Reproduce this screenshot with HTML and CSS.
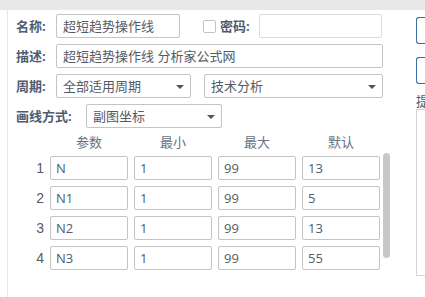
FILE: index.html
```html
<!DOCTYPE html>
<html lang="zh">
<head>
    <meta charset="UTF-8">
    <meta name="viewport" content="width=device-width, initial-scale=1.0">
    <title>指标编辑</title>
    <link rel="stylesheet" href="styles.css">
</head>
<body>

<div class="topbar"></div>

<div class="main">
    <div class="panel">
        <div class="row">
            <label class="lbl">名称:</label>
            <div class="input w-name">超短趋势操作线</div>
            <span class="check"></span>
            <label class="lbl lbl-pwd">密码:</label>
            <div class="input w-pwd"></div>
        </div>
        <div class="row">
            <label class="lbl">描述:</label>
            <div class="input w-desc">超短趋势操作线 分析家公式网</div>
        </div>
        <div class="row">
            <label class="lbl">周期:</label>
            <div class="select w-period">全部适用周期<i class="arrow"></i></div>
            <div class="select w-type">技术分析<i class="arrow"></i></div>
        </div>
        <div class="row">
            <label class="lbl">画线方式:</label>
            <div class="select w-draw">副图坐标<i class="arrow"></i></div>
        </div>

        <div class="params">
            <div class="grid">
                <span></span>
                <span class="head">参数</span>
                <span class="head">最小</span>
                <span class="head">最大</span>
                <span class="head">默认</span>

                <span class="num">1</span>
                <div class="input cell">N</div>
                <div class="input cell">1</div>
                <div class="input cell">99</div>
                <div class="input cell">13</div>

                <span class="num">2</span>
                <div class="input cell">N1</div>
                <div class="input cell">1</div>
                <div class="input cell">99</div>
                <div class="input cell">5</div>

                <span class="num">3</span>
                <div class="input cell">N2</div>
                <div class="input cell">1</div>
                <div class="input cell">99</div>
                <div class="input cell">13</div>

                <span class="num">4</span>
                <div class="input cell">N3</div>
                <div class="input cell">1</div>
                <div class="input cell">99</div>
                <div class="input cell">55</div>
            </div>
            <div class="thumb"></div>
        </div>
    </div>

    <div class="side">
        <div class="btn"></div>
        <div class="btn"></div>
        <div class="side-lbl">提</div>
        <div class="textarea"></div>
    </div>
</div>

</body>
</html>
```

FILE: styles.css
```css
body {
    margin: 0;
    padding: 0;
    background-color: #fff;
    font-family: "Open Sans", "Noto Sans CJK SC", sans-serif;
    font-size: 13px;
    color: #555b66;
    overflow: hidden;
}
.topbar {
    height: 10px;
    background-color: #e8e8e8;
}
.main {
    display: flex;
    height: 287px;
}
.panel {
    width: 392px;
    margin-left: 7px;
    border-left: 1px solid #e6e6e6;
    padding: 4px 0 0 8px;
    box-sizing: border-box;
    flex-shrink: 0;
}
.row {
    display: flex;
    align-items: center;
    height: 24px;
    margin-bottom: 6px;
}
.lbl {
    font-weight: bold;
    color: #4f5c70;
    line-height: 24px;
    white-space: nowrap;
    width: 40px;
}
.lbl-pwd {
    width: 39px;
}
.input, .select {
    height: 24px;
    box-sizing: border-box;
    border: 1px solid #c4c4c4;
    border-radius: 2px;
    padding: 0 6px;
    line-height: 22px;
    color: #555b66;
    white-space: nowrap;
    overflow: hidden;
    position: relative;
}
.w-name { width: 124px; }
.w-pwd { width: 123px; border-color: #dcdcdc; }
.w-desc { width: 327px; }
.w-period { width: 135px; }
.w-type { width: 179px; margin-left: 13px; }
.w-draw { width: 136px; margin-left: 30px; }
.check {
    width: 13px;
    height: 13px;
    border: 1px solid #c4c4c4;
    border-radius: 2px;
    box-sizing: border-box;
    margin-left: 23px;
    margin-right: 4px;
}
.arrow {
    position: absolute;
    right: 6px;
    top: 10px;
    width: 0;
    height: 0;
    border-left: 4px solid transparent;
    border-right: 4px solid transparent;
    border-top: 4px solid #555;
}
.params {
    position: relative;
}
.grid {
    display: grid;
    grid-template-columns: 28px repeat(4, 78px);
    column-gap: 6px;
    row-gap: 6px;
}
.head {
    text-align: center;
    color: #66737f;
    line-height: 16px;
}
.num {
    text-align: right;
    line-height: 24px;
    color: #555b66;
    font-family: "Liberation Sans", sans-serif;
    font-size: 14px;
}
.cell {
    width: 78px;
    padding: 0 5px;
}
.thumb {
    position: absolute;
    left: 367px;
    top: 19px;
    width: 7px;
    height: 105px;
    border-radius: 4px;
    background-color: #c8c8c8;
}
.side {
    margin-left: 17px;
    padding-top: 7px;
    flex: 1;
}
.btn {
    height: 27px;
    border: 1px solid #3d6ea6;
    border-right: none;
    border-radius: 3px 0 0 3px;
    box-sizing: border-box;
    margin-bottom: 13px;
}
.side-lbl {
    line-height: 12px;
    margin-top: -2px;
    color: #555b66;
}
.textarea {
    height: 167px;
    margin-top: 2px;
    border: 1px solid #d4d4d4;
    border-right: none;
    box-sizing: border-box;
}
```
